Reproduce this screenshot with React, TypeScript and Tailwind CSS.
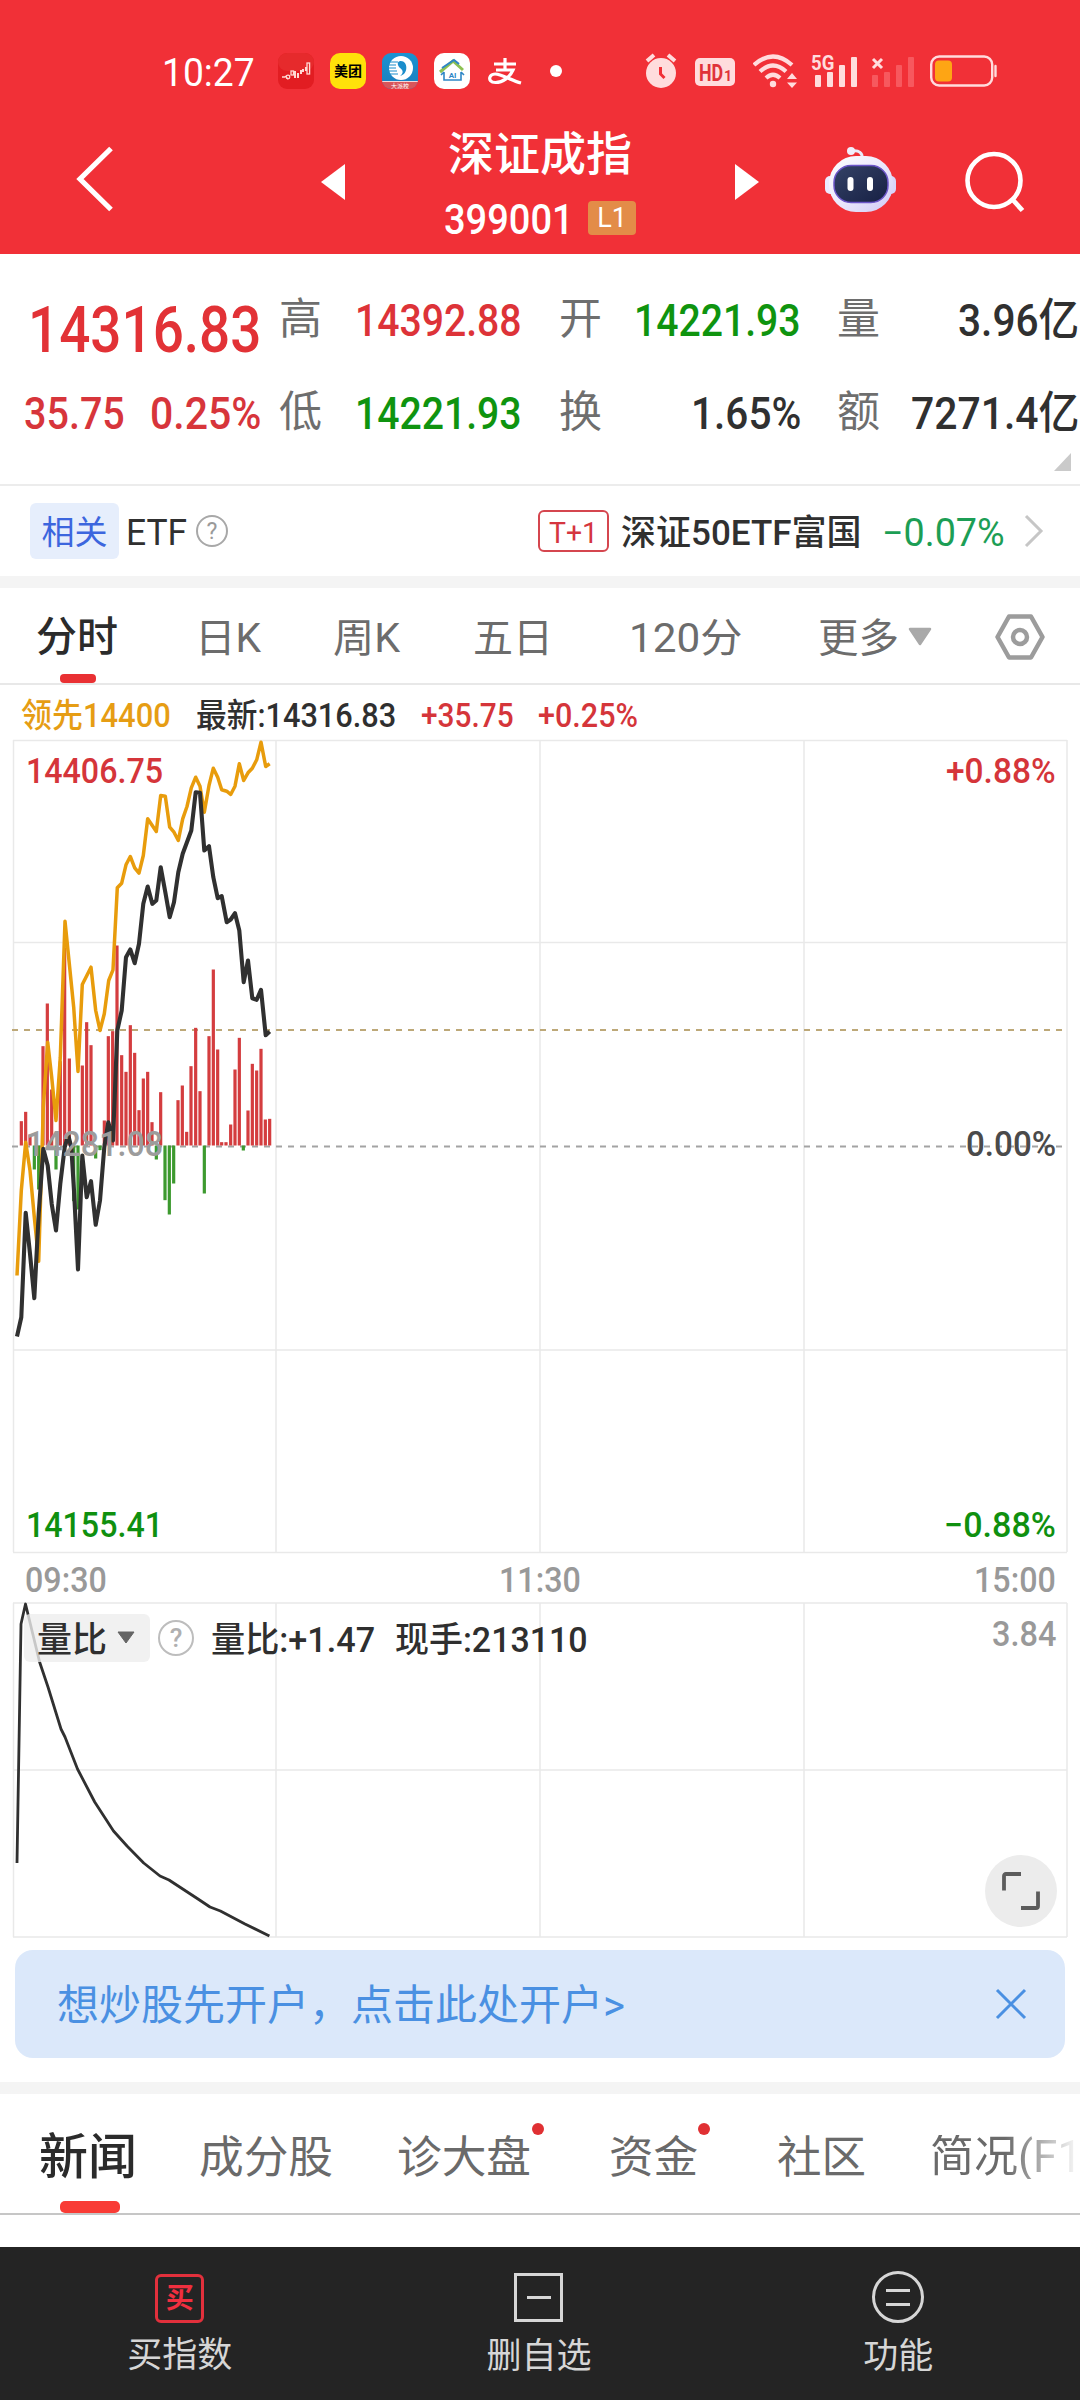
import { useLayoutEffect, useRef } from "react";
import type { ReactNode } from "react";

/** Text squeezed or stretched horizontally so that it fills its box, less a pixel on each side. */
function Fit({ className, children }: { className: string; children: ReactNode }) {
  const outer = useRef<HTMLSpanElement>(null);
  const inner = useRef<HTMLSpanElement>(null);
  useLayoutEffect(() => {
    const apply = () => {
      if (!outer.current || !inner.current) return;
      const ratio = (outer.current.clientWidth - 2) / inner.current.offsetWidth;
      inner.current.style.transform = `translate(1px, 1.5px) scaleX(${ratio})`;
    };
    apply();
    document.fonts?.ready.then(apply);
  }, []);
  return (
    <span ref={outer} className={`block flex-none whitespace-nowrap leading-none ${className}`}>
      <span ref={inner} className="inline-block origin-left">
        {children}
      </span>
    </span>
  );
}

type Pt = [number, number];
const toPath = (pts: Pt[]) => pts.map(([x, y]) => `${(x / 3).toFixed(1)},${(y / 3 - 8.5).toFixed(1)}`).join(" ");

/* Intraday samples in thirds of a pixel, vertical origin 9px above the plot. */
const price: Pt[] = [
  [51, 1818], [64, 1760], [77, 1447], [90, 1570], [103, 1703], [116, 1450], [130, 1255], [143, 1305], [155, 1420],
  [168, 1500], [181, 1360], [194, 1250], [205, 1215], [214, 1250], [222, 1380], [234, 1617], [247, 1275], [260, 1400],
  [273, 1352], [287, 1483], [300, 1410], [313, 1250], [325, 1175], [339, 1230], [352, 900], [365, 840], [378, 680],
  [391, 657], [404, 698], [417, 640], [430, 520], [443, 468], [457, 520], [469, 510], [482, 410], [496, 485],
  [509, 560], [522, 515], [535, 425], [548, 370], [574, 300], [587, 185], [600, 187], [613, 360], [627, 347],
  [640, 440], [653, 503], [665, 497], [680, 575], [692, 567], [705, 548], [718, 600], [731, 755], [744, 690],
  [757, 803], [770, 808], [783, 778], [797, 914], [809, 903],
];
const lead: Pt[] = [
  [51, 1635], [64, 1380], [77, 1235], [90, 1320], [103, 1460], [116, 1592], [130, 1130], [143, 935], [155, 1040],
  [168, 1170], [181, 980], [195, 572], [208, 700], [221, 830], [234, 1023], [247, 762], [273, 710], [287, 840],
  [300, 900], [313, 850], [326, 750], [339, 718], [352, 472], [365, 458], [378, 403], [391, 378], [404, 412],
  [417, 428], [430, 375], [443, 265], [469, 303], [482, 195], [496, 197], [509, 290], [522, 305], [535, 330],
  [548, 265], [561, 228], [574, 172], [587, 140], [600, 167], [613, 245], [627, 165], [640, 113], [653, 140],
  [665, 178], [680, 182], [692, 192], [705, 167], [718, 100], [731, 150], [744, 127], [757, 113], [770, 88],
  [783, 35], [797, 108], [809, 100],
];
/* Bar ends relative to the zero line, in thirds of a pixel; positive is up. */
const bars: Pt[] = [
  [64, 73], [77, 101], [90, 33], [129, 298], [142, 426], [155, 168], [181, 253], [194, 593], [208, 261], [247, 240],
  [260, 370], [273, 301], [313, 75], [325, 328], [338, 343], [351, 600], [365, 271], [378, 221], [391, 361],
  [404, 278], [417, 106], [430, 201], [443, 221], [456, 70], [482, 160], [534, 136], [547, 180], [560, 41],
  [573, 238], [587, 353], [600, 163], [627, 328], [640, 528], [653, 288], [665, 10], [678, 10], [692, 63],
  [705, 228], [718, 323], [744, 105], [757, 245], [770, 225], [783, 290], [796, 78], [809, 80], [103, -72],
  [116, -132], [168, -72], [221, -167], [234, -192], [287, -39], [300, -14], [469, -42], [495, -164], [508, -207],
  [521, -114], [613, -144], [730, -15],
];

function StatusBar() {
  return (
    <div className="flex h-[124px] items-center pt-[18px]">
      <Fit className="ml-[161px] w-[95px] text-[38px]">10:27</Fit>
      <svg className="ml-[22px] flex-none" width="36" height="36" viewBox="0 0 36 36">
        <rect width="36" height="36" rx="9" fill="#e21d22" />
        <rect width="36" height="18" rx="9" fill="#e62a2c" />
        <g fill="none" stroke="#ffd9d4" strokeWidth="1.3">
          <path d="M4 24h3M7 23l3 3" />
          <circle cx="10" cy="24" r="1.8" />
          <rect x="13" y="18" width="2.5" height="4" />
          <path d="M17 18v7M20 20v5M23 17v4M25 16v3M28 14v4" strokeWidth="2" />
          <rect x="29" y="10" width="2.6" height="11" />
        </g>
      </svg>
      <div className="ml-4 flex size-9 flex-none items-center justify-center rounded-[10px] bg-[#ffe10a] text-[14px] font-bold leading-none text-black">
        美团
      </div>
      <svg className="ml-4 flex-none" width="36" height="36" viewBox="0 0 36 36">
        <defs>
          <linearGradient id="telecom" x1="0" y1="0" x2="0" y2="1">
            <stop offset="0" stopColor="#1b93d2" />
            <stop offset="1" stopColor="#1a7dbd" />
          </linearGradient>
          <clipPath id="round-app">
            <rect width="36" height="36" rx="9" />
          </clipPath>
        </defs>
        <g clipPath="url(#round-app)">
          <rect width="36" height="36" fill="url(#telecom)" />
          <circle cx="19" cy="15" r="12" fill="#fff" />
          <path d="M18 8c8-1 9 13 0 15 4-3 3-6 0-8-3-3-3-6 0-7z" fill="#1b8dcb" />
          <path d="M6 9h10M5 12h9M5 15h9M5 18h10M6 21h10" stroke="#1b8dcb" strokeWidth="1.2" />
          <rect y="28" width="36" height="8" fill="#d8555a" />
          <path d="M0 28.5h36" stroke="#f3d7d9" strokeWidth="1" />
          <text x="18" y="35" fontSize="6" textAnchor="middle" fill="#fff">大派校</text>
        </g>
      </svg>
      <svg className="ml-4 flex-none" width="36" height="36" viewBox="0 0 36 36">
        <rect width="36" height="36" rx="10" fill="#fff" />
        <path d="M6 19 19 8l10 9" fill="none" stroke="#8cc152" strokeWidth="3" />
        <path d="M8 15 20 7l5 4" fill="none" stroke="#2f86c6" strokeWidth="2" />
        <path d="M10 19v8h17v-8M7 22l3-3M30 22l-3-3" fill="none" stroke="#2f86c6" strokeWidth="1.6" />
        <text x="18.5" y="24.500" fontSize="8" fontWeight="700" textAnchor="middle" fill="#2f86c6">AI</text>
      </svg>
      <svg className="ml-[18px] flex-none" width="34" height="28" viewBox="0 0 34 28" fill="none" stroke="#fff" strokeWidth="3.200">
        <path d="M6 7h22M17 1v11M8 13h17c-3 7-10 12.500-17.500 12.500C2.500 25.500 1 22.500 2 20c1.200-3 5.500-3.500 10-2C19 20.500 26 24 33 26" />
      </svg>
      <span className="ml-[28px] size-3 flex-none rounded-full bg-white" />
      <svg className="ml-[83px] flex-none" width="32" height="36" viewBox="0 0 32 36" fill="#ffdcdd">
        <circle cx="16" cy="20" r="15" />
        <path d="M2 8 9 2M30 8l-7-6" stroke="#ffdcdd" strokeWidth="4" />
        <path d="M15.500 14v7l4 4" fill="none" stroke="#f13037" strokeWidth="3" />
      </svg>
      <div className="ml-[18px] mt-[2px] flex h-7 w-10 flex-none items-end justify-center rounded-[5px] bg-[#ffdcdd] pb-[3px] text-[#e0333a]">
        <Fit className="w-[26px] text-[23px] font-bold">HD</Fit>
        <span className="text-[14px] font-bold leading-none">1</span>
      </div>
      <svg className="ml-[18px] flex-none" width="46" height="36" viewBox="0 0 46 36">
        <g fill="none" stroke="#ffdcdd" strokeWidth="4.200">
          <path d="M1 12q19-17 38 0" />
          <path d="M7 18.500q13-12 26 0" />
          <path d="M13 25q7-6.500 14 0" />
        </g>
        <circle cx="20" cy="31" r="3.200" fill="#ffdcdd" />
        <path d="m39 20 5 6H34zM39 35l5-5.500H34z" fill="#ffdcdd" />
      </svg>
      <div className="relative ml-[12px] h-9 w-[46px] flex-none">
        <svg width="46" height="36" viewBox="0 0 46 36" fill="#ffdcdd">
          <rect x="4" y="22" width="6" height="12" rx="1" />
          <rect x="16" y="19" width="6" height="15" rx="1" />
          <rect x="28" y="12" width="6" height="22" rx="1" />
          <rect x="40" y="4" width="6" height="30" rx="1" />
        </svg>
        <Fit className="absolute -left-px -top-[2px] w-[25px] text-[21px] font-bold text-[#ffdcdd]">5G</Fit>
      </div>
      <svg className="ml-[14px] flex-none" width="45" height="36" viewBox="0 0 45 36" fill="#f7585e">
        <path d="m2 6 9 9m0-9-9 9" stroke="#ffdcdd" strokeWidth="3" />
        <rect x="1" y="22" width="6" height="12" rx="1" />
        <rect x="13" y="19" width="6" height="15" rx="1" />
        <rect x="25" y="12" width="6" height="22" rx="1" />
        <rect x="37" y="4" width="6" height="30" rx="1" />
      </svg>
      <svg className="ml-[14px] flex-none" width="68" height="32" viewBox="0 0 68 32">
        <rect x="1.200" y="1.500" width="61" height="29" rx="8" fill="none" stroke="#ffdcdd" strokeWidth="2.400" />
        <rect x="5" y="5.500" width="17" height="21" rx="4" fill="#fea514" />
        <path d="M65.500 11v10" stroke="#ffdcdd" strokeWidth="2.400" strokeLinecap="round" />
      </svg>
    </div>
  );
}

function TitleBar() {
  return (
    <div className="flex h-[130px] items-start">
      <svg className="ml-[76px] mt-[22px] flex-none" width="38" height="66" viewBox="0 0 38 66">
        <path d="M35 2.500 4 33l31 30.500" fill="none" stroke="#fff" strokeWidth="5.200" />
      </svg>
      <svg className="ml-[207px] mt-10 flex-none" width="24" height="36" viewBox="0 0 24 36">
        <path d="M24 0v36L0 18z" fill="#fff" />
      </svg>
      <div className="ml-[101px] w-[190px] flex-none pt-[7px]">
        <span className="block pl-[2px] text-[46px] font-medium leading-none">深证成指</span>
        <div className="mt-[19px] flex items-start">
          <Fit className="-ml-[3px] w-[132px] text-[43px] font-medium">399001</Fit>
          <span className="ml-[13px] mt-[5px] flex h-[34px] w-12 flex-none items-center justify-center rounded-[4px] bg-[#e38c48] text-[27px] leading-none">
            L1
          </span>
        </div>
      </div>
      <svg className="ml-[99px] mt-10 flex-none" width="24" height="36" viewBox="0 0 24 36">
        <path d="M0 0v36l24-18z" fill="#fff" />
      </svg>
      <svg className="ml-[66px] mt-[22px] flex-none" width="74" height="68" viewBox="0 0 74 68">
        <defs>
          <linearGradient id="shell" x1="0" y1="0" x2="1" y2="1">
            <stop offset="0" stopColor="#ffffff" />
            <stop offset=".55" stopColor="#e9e6fb" />
            <stop offset="1" stopColor="#cfc9f6" />
          </linearGradient>
          <linearGradient id="visor" x1="0" y1="0" x2="1" y2="1">
            <stop offset="0" stopColor="#344266" />
            <stop offset="1" stopColor="#172044" />
          </linearGradient>
        </defs>
        <path d="M37 13c1-6-3-9-10-8" fill="none" stroke="#e9ecfb" strokeWidth="3" />
        <circle cx="26" cy="5" r="4" fill="#f1eefc" />
        <rect x="0" y="30" width="13" height="18" rx="5" fill="#eceaff" />
        <rect x="58" y="30" width="13" height="18" rx="5" fill="#d9d5fa" />
        <rect x="4" y="10" width="64" height="56" rx="27" fill="url(#shell)" />
        <rect x="9" y="19.500" width="54" height="37" rx="17" fill="url(#visor)" stroke="#6b55c8" strokeWidth="1.500" />
        <rect x="22.500" y="31" width="6" height="14" rx="3" fill="#fff" />
        <rect x="42" y="31" width="6" height="14" rx="3" fill="#fff" />
      </svg>
      <svg className="ml-[66px] mt-[27px] flex-none" width="62" height="62" viewBox="0 0 62 62">
        <circle cx="29" cy="29.500" r="26.500" fill="none" stroke="#fff" strokeWidth="4.600" />
        <path d="m47.500 48.500 10 11" stroke="#fff" strokeWidth="4.800" />
      </svg>
    </div>
  );
}

function QuoteLabel({ className, children }: { className: string; children: ReactNode }) {
  return (
    <span className={`flex-none pt-[2px] text-[43px] font-normal leading-none text-[#6e6e6e] ${className}`}>
      {children}
    </span>
  );
}

function Quotes() {
  return (
    <section className="h-[232px] border-b-2 border-[#ececec] pt-[18px] font-medium">
      <div className="flex h-[93px] items-center text-[45px]">
        <Fit className="ml-[27px] mt-[21px] w-[235px] text-[64px] text-[#e23236]">14316.83</Fit>
        <QuoteLabel className="ml-[17px]">高</QuoteLabel>
        <Fit className="ml-[32px] w-[169px] text-[#dd3338]">14392.88</Fit>
        <QuoteLabel className="ml-[36px]">开</QuoteLabel>
        <Fit className="ml-[31px] w-[169px] text-[#0f940f]">14221.93</Fit>
        <QuoteLabel className="ml-[35px]">量</QuoteLabel>
        <Fit className="ml-[77px] w-[123px] text-[#303030]">3.96亿</Fit>
      </div>
      <div className="flex h-[93px] items-center text-[45px]">
        <Fit className="ml-[23px] w-[103px] text-[#d7353b]">35.75</Fit>
        <Fit className="ml-[23px] w-[113px] text-[#d7353b]">0.25%</Fit>
        <QuoteLabel className="ml-[17px]">低</QuoteLabel>
        <Fit className="ml-[32px] w-[169px] text-[#0f940f]">14221.93</Fit>
        <QuoteLabel className="ml-[36px]">换</QuoteLabel>
        <Fit className="ml-[88px] w-[112px] text-[#303030]">1.65%</Fit>
        <QuoteLabel className="ml-[35px]">额</QuoteLabel>
        <Fit className="ml-[30px] w-[170px] text-[#303030]">7271.4亿</Fit>
      </div>
      <svg className="-mt-[5px] ml-[1054px]" width="17" height="18" viewBox="0 0 17 18">
        <path d="M17 0v18H0z" fill="#cacaca" />
      </svg>
    </section>
  );
}

function HelpCircle({ className }: { className: string }) {
  return (
    <span className={`flex flex-none items-center justify-center rounded-full border-2 leading-none ${className}`}>?</span>
  );
}

function RelatedRow() {
  return (
    <section className="flex h-[90px] items-center">
      <span className="ml-[30px] flex h-14 w-[89px] flex-none items-center justify-center rounded-[6px] bg-[#e6eefc] pt-[2px] text-[33px] leading-none text-[#3c66de]">
        相关
      </span>
      <Fit className="ml-[6px] w-[63px] text-[36px] text-[#303030]">ETF</Fit>
      <HelpCircle className="ml-[8px] size-8 border-[#a8a8a8] text-[23px] text-[#9a9a9a]" />
      <span className="ml-[310px] flex h-[42px] w-[71px] flex-none items-center justify-center rounded-[6px] border-2 border-[#d5464f] text-[#d5353f]">
        <Fit className="w-[51px] text-[29px]">T+1</Fit>
      </span>
      <Fit className="ml-[11px] w-[243px] text-[35px] font-medium text-[#303030]">深证50ETF富国</Fit>
      <Fit className="ml-[18px] w-[125px] text-[38px] text-[#1c9e55]">−0.07%</Fit>
      <svg className="ml-[18px] flex-none" width="20" height="34" viewBox="0 0 20 34">
        <path d="m2 2 15 15L2 32" fill="none" stroke="#c6c6c6" strokeWidth="3" />
      </svg>
    </section>
  );
}

function PeriodTabs() {
  return (
    <section className="relative flex h-[97px] items-center border-b-2 border-[#e8e8e8] pt-[2px] text-[40px] leading-none text-[#6c6c6c]">
      <span className="ml-[36px] w-[83px] flex-none pt-[2px] text-[41px] font-medium leading-none text-[#2b2b2b]">分时</span>
      <Fit className="ml-[75px] w-[68px]">日K</Fit>
      <Fit className="ml-[70px] w-[69px]">周K</Fit>
      <Fit className="ml-[71px] w-[82px]">五日</Fit>
      <Fit className="ml-[74px] w-[115px]">120分</Fit>
      <Fit className="ml-[74px] w-[83px]">更多</Fit>
      <svg className="ml-[8px] flex-none" width="24" height="20" viewBox="0 0 24 20">
        <path d="M2 2h20L12 17z" fill="#a9a9a9" stroke="#a9a9a9" strokeWidth="2.500" strokeLinejoin="round" />
      </svg>
      <svg className="ml-[62px] flex-none" width="52" height="48" viewBox="0 0 52 48" fill="none" stroke="#9c9c9c">
        <path d="M15 3.500h22L48.500 24 37 44.500H15L3.500 24z" strokeWidth="4.500" strokeLinejoin="round" />
        <circle cx="26" cy="24" r="7" strokeWidth="4.500" />
      </svg>
      <span className="absolute bottom-0 left-[60px] h-[9px] w-9 rounded-[4px] bg-[#e93033]" />
    </section>
  );
}

const gridX = [13.5, 276, 540, 804, 1067];

function PriceChart() {
  return (
    <section className="relative h-[815px] text-[35px] font-medium">
      <svg className="block" width="1080" height="815" viewBox="0 0 1080 815">
        <g stroke="#e9e9e9" strokeWidth="1.500">
          {gridX.map((x) => (
            <path key={x} d={`M${x} 1v812`} />
          ))}
          <path d="M13 1.500h1054M13 203.500h1054M13 611h1054M13 813.500h1054" />
        </g>
        <path d="M12 291h1051" stroke="#bda878" strokeWidth="2" strokeDasharray="6 6" />
        <path d="M12 407.500h1051" stroke="#a3a3a3" strokeWidth="2" strokeDasharray="6 6" />
        {bars.map(([x, v]) => (
          <rect
            key={x}
            x={x / 3 - 1.6}
            y={v > 0 ? 406.5 - v / 3 : 406.5}
            width="3.2"
            height={Math.abs(v) / 3}
            fill={v > 0 ? "#d43d3f" : "#3d9a2f"}
          />
        ))}
        <polyline points={toPath(lead)} fill="none" stroke="#e89c0c" strokeWidth="3.500" strokeLinejoin="round" />
        <polyline points={toPath(price)} fill="none" stroke="#303030" strokeWidth="4.100" strokeLinejoin="round" />
      </svg>
      <Fit className="absolute left-[25px] top-[13px] w-[139px] text-[#d5353a]">14406.75</Fit>
      <Fit className="absolute left-[25px] top-[386px] w-[139px] text-[#9c9c9c]">14281.08</Fit>
      <Fit className="absolute left-[25px] top-[767px] w-[139px] text-[#0f900f]">14155.41</Fit>
      <Fit className="absolute left-[945px] top-[13px] w-[112px] text-[#d5353a]">+0.88%</Fit>
      <Fit className="absolute left-[965px] top-[386px] w-[92px] text-[#4a4a4a]">0.00%</Fit>
      <Fit className="absolute left-[943px] top-[767px] w-[114px] text-[#0f900f]">−0.88%</Fit>
    </section>
  );
}

function VolumeRatioChart() {
  return (
    <section className="relative h-[336px]">
      <svg className="block" width="1080" height="336" viewBox="0 0 1080 336">
        <g stroke="#e9e9e9" strokeWidth="1.500">
          {gridX.map((x) => (
            <path key={x} d={`M${x} 1v334`} />
          ))}
          <path d="M13 1h1054M13 168h1054M13 335h1054" />
        </g>
        <polyline
          fill="none"
          stroke="#303030"
          strokeWidth="2.800"
          strokeLinejoin="round"
          points="17,261 21,22 25.5,2 39.6,60 48,85 61,127 65,135 77.5,167 94.7,200 113.5,229 127,244 143.7,261 160,274 169,278 198,297 210,305 220.4,309 245,322 269.4,334"
        />
      </svg>
      <div className="absolute left-6 top-3 flex h-12 items-center text-[35px] font-medium text-[#2f2f2f]">
        <span className="relative flex h-12 w-[126px] flex-none items-center rounded-[6px] bg-[#eeeeee]/80">
          <Fit className="ml-3 w-[72px]">量比</Fit>
          <svg className="ml-[8px] flex-none" width="20" height="14" viewBox="0 0 20 14">
            <path d="M2 1h16l-8 11z" fill="#646464" stroke="#646464" strokeLinejoin="round" />
          </svg>
        </span>
        <HelpCircle className="ml-2 size-9 border-[#bdbdbd] text-[26px] text-[#b0b0b0]" />
        <Fit className="ml-4 w-[166px]">量比:+1.47</Fit>
        <Fit className="ml-[18px] w-[195px]">现手:213110</Fit>
      </div>
      <Fit className="absolute left-[991px] top-[13px] w-[66px] text-[35px] font-medium text-[#999999]">3.84</Fit>
      <div className="absolute left-[985px] top-[253px] flex size-[72px] items-center justify-center rounded-full bg-[#ececec]">
        <svg width="38" height="38" viewBox="0 0 38 38" fill="none" stroke="#5c5c5c" strokeWidth="3.800">
          <path d="M2 18.500V4q0-2 2-2h15M36 19.500V34q0 2-2 2H19" />
        </svg>
      </div>
    </section>
  );
}

function NewsTabs() {
  return (
    <section className="relative flex h-[121px] items-start overflow-hidden border-b-2 border-[#c6c6c6] pt-10 text-[44px] leading-none text-[#6a6a6a]">
      <span className="-mt-px ml-[39px] w-[99px] flex-none text-[49px] font-medium leading-none text-[#2b2b2b]">新闻</span>
      <Fit className="ml-[60px] w-[136px]">成分股</Fit>
      <div className="relative ml-[62px] flex-none">
        <Fit className="w-[136px]">诊大盘</Fit>
        <i className="absolute -right-[12px] -top-[11px] size-3 rounded-full bg-[#e03033]" />
      </div>
      <div className="relative ml-[76px] flex-none">
        <Fit className="w-[91px]">资金</Fit>
        <i className="absolute -right-[11px] -top-[11px] size-3 rounded-full bg-[#e03033]" />
      </div>
      <Fit className="ml-[77px] w-[91px]">社区</Fit>
      <span className="ml-[63px] mt-px w-[150px] flex-none whitespace-nowrap bg-gradient-to-r from-[#6a6a6a] from-50% to-white bg-clip-text leading-none text-transparent">
        简况(F10)
      </span>
      <span className="absolute bottom-0 left-[60px] h-3 w-[60px] rounded-[5px] bg-[#f93b35]" />
    </section>
  );
}

function BottomBar() {
  return (
    <nav className="grid h-[153px] grid-cols-3 bg-[#242424] pr-[2px] pt-6 text-[35px] leading-none text-[#d6d6d6]">
      <div className="flex flex-col items-center">
        <span className="mt-[3px] flex size-[49px] items-center justify-center rounded-[6px] border-[3px] border-[#e2303c] text-[28px] font-bold leading-none text-[#f02f3f]">
          买
        </span>
        <span className="mt-[15px]">买指数</span>
      </div>
      <div className="flex flex-col items-center">
        <span className="mt-[2px] flex size-[49px] items-center justify-center border-[3px] border-[#d6d6d6]">
          <i className="h-[3px] w-6 bg-[#d6d6d6]" />
        </span>
        <span className="mt-[17px]">删自选</span>
      </div>
      <div className="flex flex-col items-center">
        <span className="flex size-[52px] flex-col items-center justify-center gap-[11px] rounded-full border-[3px] border-[#d6d6d6]">
          <i className="h-[3px] w-6 bg-[#d6d6d6]" />
          <i className="h-[3px] w-6 bg-[#d6d6d6]" />
        </span>
        <span className="mt-[16px]">功能</span>
      </div>
    </nav>
  );
}

export default function App() {
  return (
    <main className="flex h-[2400px] w-[1080px] flex-col overflow-hidden bg-white font-['Roboto','Noto_Sans_CJK_SC',sans-serif]">
      <header className="h-[254px] bg-[#f13037] text-white">
        <StatusBar />
        <TitleBar />
      </header>
      <Quotes />
      <RelatedRow />
      <div className="h-3 flex-none bg-[#f4f4f4]" />
      <PeriodTabs />
      <div className="flex h-[54px] items-center pt-[3px] text-[33px]">
        <Fit className="ml-[20px] w-[152px] font-medium text-[#e69d14]">领先14400</Fit>
        <Fit className="ml-[23px] w-[202px] font-medium text-[#2f2f2f]">最新:14316.83</Fit>
        <Fit className="ml-[23px] w-[95px] font-medium text-[#d5353a]">+35.75</Fit>
        <Fit className="ml-[22px] w-[102px] font-medium text-[#d5353a]">+0.25%</Fit>
      </div>
      <PriceChart />
      <div className="flex h-[48px] items-center text-[35px] font-medium text-[#999999]">
        <Fit className="ml-[24px] w-[84px]">09:30</Fit>
        <Fit className="ml-[390px] w-[84px]">11:30</Fit>
        <Fit className="ml-[391px] w-[84px]">15:00</Fit>
      </div>
      <VolumeRatioChart />
      <div className="mx-[15px] mt-3 flex h-[108px] flex-none items-center justify-between rounded-[18px] bg-[#dbe8fa] pl-[41px] pr-[38px] text-[#4a90e2]">
        <Fit className="w-[570px] text-[42px]">想炒股先开户，点击此处开户&gt;</Fit>
        <svg width="32" height="32" viewBox="0 0 32 32">
          <path d="m2 2 28 28M30 2 2 30" stroke="#4a90e2" strokeWidth="3" />
        </svg>
      </div>
      <div className="mt-6 h-3 flex-none bg-[#f4f4f4]" />
      <NewsTabs />
      <div className="flex-1" />
      <BottomBar />
    </main>
  );
}
